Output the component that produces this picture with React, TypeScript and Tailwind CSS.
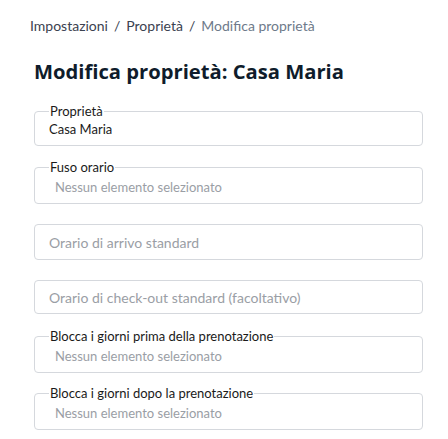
import React from 'react';

const font = { fontFamily: 'Lato, "Open Sans", sans-serif' };

const LegendField = ({
  label,
  value,
  placeholder,
  className,
}: {
  label: string;
  value?: string;
  placeholder?: boolean;
  className: string;
}) => (
  <fieldset className={`${className} m-0 min-w-0 rounded-[4px] border border-[#d5d8dd] px-[14px] pb-0`}>
    <legend className="px-px text-[13px] leading-[14px] text-[#1a1a1a]">{label}</legend>
    {placeholder ? (
      <div className="pl-[6px] pt-[5px] text-[13px] leading-[16px] text-[#9a9ea5]">{value}</div>
    ) : (
      <div className="pt-[3px] text-[13px] leading-[16px] text-[#1a1a1a]">{value}</div>
    )}
  </fieldset>
);

const InputField = ({ placeholder, className }: { placeholder: string; className: string }) => (
  <div className="pt-[7px]">
    <div className={`${className} flex items-center rounded-[4px] border border-[#d5d8dd] px-[14px] text-[14px] text-[#9a9ea5]`}>
      {placeholder}
    </div>
  </div>
);

export default function App() {
  return (
    <div className="min-h-[439px] w-[448px] bg-white" style={font}>
      <div className="pl-[30px] pt-[17px] text-[14px] leading-[18px]">
        <span className="text-[#3b4250]">Impostazioni</span>
        <span className="mx-[6px] text-[#3b4250]">/</span>
        <span className="text-[#3b4250]">Proprietà</span>
        <span className="mx-[6px] text-[#3b4250]">/</span>
        <span className="text-[#6e7a8a]">Modifica proprietà</span>
      </div>
      <h1 className="mt-[24px] pl-[34px] font-['Open_Sans',sans-serif] text-[20.2px] font-bold leading-[24px] text-[#0f1c2b]">
        Modifica proprietà: Casa Maria
      </h1>
      <div className="mt-[21px] ml-[34px] mr-[25px] flex flex-col gap-[13px]">
        <LegendField className="h-[42px]" label="Proprietà" value="Casa Maria" />
        <LegendField className="mt-px h-[44px]" label="Fuso orario" value="Nessun elemento selezionato" placeholder />
        <InputField className="h-[36px]" placeholder="Orario di arrivo standard" />
        <InputField className="h-[34px]" placeholder="Orario di check-out standard (facoltativo)" />
        <LegendField className="mt-[2px] h-[44px]" label="Blocca i giorni prima della prenotazione" value="Nessun elemento selezionato" placeholder />
        <LegendField className="h-[44px]" label="Blocca i giorni dopo la prenotazione" value="Nessun elemento selezionato" placeholder />
      </div>
    </div>
  );
}
